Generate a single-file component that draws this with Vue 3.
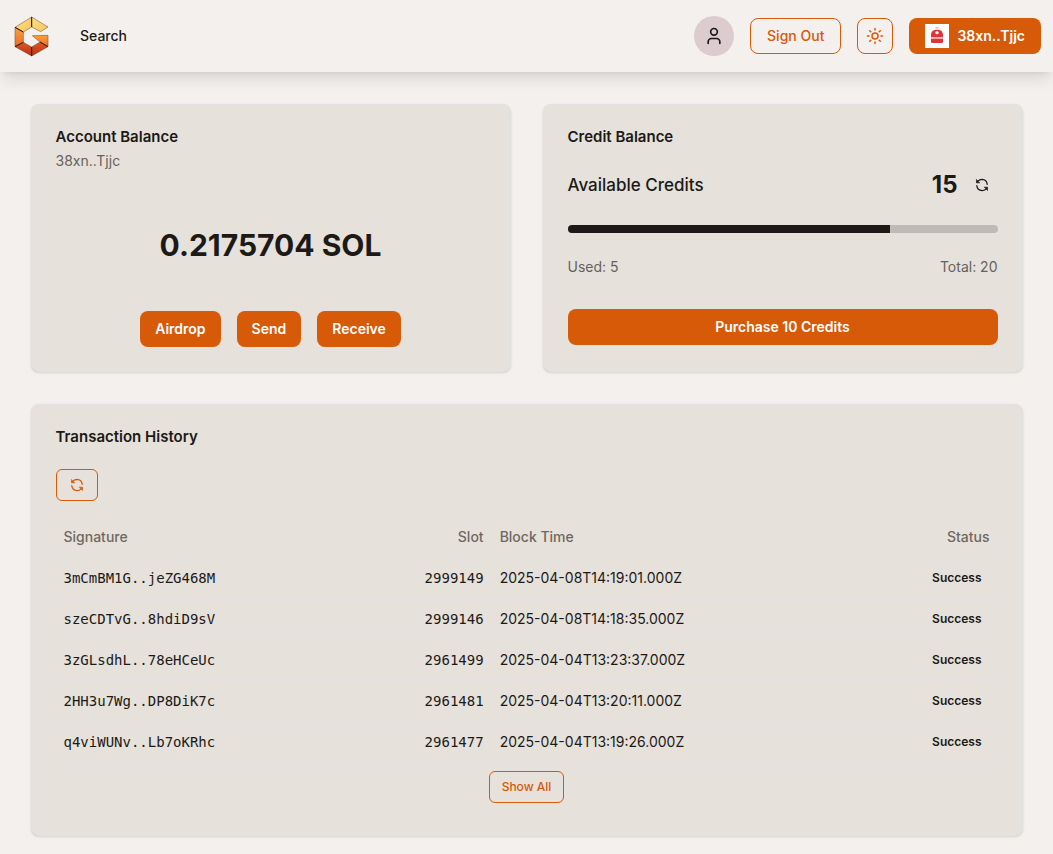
<script setup>
import { computed, ref } from 'vue'

const wallet = '38xn..Tjjc'
const total = ref(20)
const used = ref(5)
const available = computed(() => total.value - used.value)
const percent = computed(() => (available.value / total.value) * 100)

const transactions = [
  { signature: '3mCmBM1G..jeZG468M', slot: 2999149, time: '2025-04-08T14:19:01.000Z', status: 'Success' },
  { signature: 'szeCDTvG..8hdiD9sV', slot: 2999146, time: '2025-04-08T14:18:35.000Z', status: 'Success' },
  { signature: '3zGLsdhL..78eHCeUc', slot: 2961499, time: '2025-04-04T13:23:37.000Z', status: 'Success' },
  { signature: '2HH3u7Wg..DP8DiK7c', slot: 2961481, time: '2025-04-04T13:20:11.000Z', status: 'Success' },
  { signature: 'q4viWUNv..Lb7oKRhc', slot: 2961477, time: '2025-04-04T13:19:26.000Z', status: 'Success' },
]
</script>

<template>
  <div class="page">
    <header class="topbar">
      <a class="logo" href="#" aria-label="Home">
        <svg width="35" height="41" viewBox="42 45 105 123" aria-hidden="true">
          <defs>
            <linearGradient id="gold" x1="0" y1="0" x2="1" y2="1">
              <stop offset="0" stop-color="#fbe08a" />
              <stop offset="1" stop-color="#fcc35c" />
            </linearGradient>
            <linearGradient id="amber" x1="0" y1="0" x2="0" y2="1">
              <stop offset="0" stop-color="#fba03a" />
              <stop offset="1" stop-color="#ee6a22" />
            </linearGradient>
            <linearGradient id="ember" x1="0" y1="0" x2="0" y2="1">
              <stop offset="0" stop-color="#e2571f" />
              <stop offset="1" stop-color="#b8301a" />
            </linearGradient>
          </defs>
          <g stroke="#5c4a32" stroke-width="1.5" stroke-linejoin="round">
            <path d="M95 48 45 79 70 93 95 78Z" fill="url(#gold)" />
            <path d="M95 48 144 78 122 92 95 78Z" fill="url(#gold)" />
            <path d="M45 79V137L70 124V93Z" fill="url(#amber)" />
            <path d="M45 137 95 165V138L70 124Z" fill="url(#ember)" />
            <path d="M95 165 144 137 120 123 95 138Z" fill="url(#ember)" />
            <path d="M144 137V103L97 104 120 123Z" fill="url(#amber)" />
          </g>
          <path d="M95 48V78M45 79 70 93M45 137 70 124M95 165V138M144 137 120 123" stroke="#2a1a10" stroke-width="3" fill="none" />
        </svg>
      </a>
      <nav class="nav"><a href="#search">Search</a></nav>
      <div class="actions">
        <button class="avatar" type="button" aria-label="Profile">
          <svg class="stroke" width="20" height="20" viewBox="0 0 24 24" aria-hidden="true">
            <path d="M19 21v-2a4 4 0 0 0-4-4H9a4 4 0 0 0-4 4v2" />
            <circle cx="12" cy="7" r="4" />
          </svg>
        </button>
        <button class="btn outline" type="button">Sign Out</button>
        <button class="btn outline square" type="button" aria-label="Toggle theme">
          <svg class="stroke" width="18" height="18" viewBox="0 0 24 24" aria-hidden="true">
            <circle cx="12" cy="12" r="4" />
            <path d="M12 2v2M12 20v2M4.93 4.93l1.41 1.41M17.66 17.66l1.41 1.41M2 12h2M20 12h2M6.34 17.66l-1.41 1.41M19.07 4.93l-1.41 1.41" />
          </svg>
        </button>
        <button class="btn solid wallet" type="button">
          <svg width="24" height="24" viewBox="0 0 72 72" aria-hidden="true">
            <rect width="72" height="72" fill="#fff" />
            <path d="M28 13Q36 6 44 13Z" fill="#ee8a8c" />
            <path d="M18 39V31Q20 18 32 17H40Q52 18 54 31V39Z" fill="#df3338" />
            <rect x="18" y="39" width="36" height="5" fill="#f4b3b4" />
            <path d="M18 44H54V53Q54 57 50 57H22Q18 57 18 53Z" fill="#df3338" />
            <circle cx="36" cy="26" r="5" fill="#fff" />
          </svg>
          {{ wallet }}
        </button>
      </div>
    </header>

    <main class="content">
      <div class="pair">
        <section class="card">
          <h2>Account Balance</h2>
          <p class="address">{{ wallet }}</p>
          <p class="amount">0.2175704 SOL</p>
          <div class="row-buttons">
            <button class="btn solid" type="button">Airdrop</button>
            <button class="btn solid" type="button">Send</button>
            <button class="btn solid" type="button">Receive</button>
          </div>
        </section>

        <section class="card credit">
          <h2>Credit Balance</h2>
          <div class="available">
            <span class="label">Available Credits</span>
            <strong>{{ available }}</strong>
            <button class="ghost" type="button" aria-label="Refresh credits">
              <svg class="stroke" width="16" height="16" viewBox="-1 -1 26 26" aria-hidden="true">
                <path d="M20.5 11A9 9 0 0 0 12 3a9.75 9.75 0 0 0-6.74 2.74L4 7M3.5 13A9 9 0 0 0 12 21a9.75 9.75 0 0 0 6.74-2.74L20 17" />
                <path class="tip" d="M3 3.5v5h5ZM21 20.5v-5h-5Z" />
              </svg>
            </button>
          </div>
          <div class="bar" role="progressbar" aria-label="Available credits" aria-valuemin="0" :aria-valuemax="total" :aria-valuenow="available">
            <div class="fill" :style="{ width: percent + '%' }"></div>
          </div>
          <div class="usage">
            <span>Used: {{ used }}</span>
            <span>Total: {{ total }}</span>
          </div>
          <button class="btn solid" type="button">Purchase 10 Credits</button>
        </section>
      </div>

      <section class="card history">
        <h2>Transaction History</h2>
        <button class="btn outline small" type="button" aria-label="Refresh transactions">
          <svg class="stroke" width="16" height="16" viewBox="-1 -1 26 26" aria-hidden="true">
            <path d="M20.5 11A9 9 0 0 0 12 3a9.75 9.75 0 0 0-6.74 2.74L4 7M3.5 13A9 9 0 0 0 12 21a9.75 9.75 0 0 0 6.74-2.74L20 17" />
            <path class="tip" d="M3 3.5v5h5ZM21 20.5v-5h-5Z" />
          </svg>
        </button>
        <table>
          <thead>
            <tr>
              <th class="col-signature" scope="col">Signature</th>
              <th class="col-slot end" scope="col">Slot</th>
              <th scope="col">Block Time</th>
              <th class="end" scope="col">Status</th>
            </tr>
          </thead>
          <tbody>
            <tr v-for="tx in transactions" :key="tx.signature">
              <td class="mono">{{ tx.signature }}</td>
              <td class="mono end">{{ tx.slot }}</td>
              <td>{{ tx.time }}</td>
              <td class="end"><span class="badge">{{ tx.status }}</span></td>
            </tr>
          </tbody>
        </table>
        <button class="btn outline small show-all" type="button">Show All</button>
      </section>
    </main>
  </div>
</template>

<style>
body {
  margin: 0;
  background: #f4f0ed;
}
</style>

<style scoped>
* {
  box-sizing: border-box;
}
.page {
  min-height: 100vh;
  background: #f4f0ed;
  color: #1c1917;
  font: 14px/20px Inter, "Liberation Sans", sans-serif;
}
.topbar {
  display: flex;
  align-items: center;
  height: 72px;
  padding: 0 12px 0 14px;
  box-shadow: 0 10px 15px -3px rgba(0, 0, 0, 0.1), 0 4px 6px -4px rgba(0, 0, 0, 0.1);
}
.logo,
svg {
  display: block;
  flex: none;
}
.nav {
  margin-left: 31px;
}
.nav a {
  color: inherit;
  font-weight: 500;
  text-decoration: none;
}
.actions {
  display: flex;
  align-items: center;
  gap: 16px;
  margin-left: auto;
}
.stroke {
  fill: none;
  stroke: currentColor;
  stroke-width: 2;
  stroke-linecap: round;
  stroke-linejoin: round;
}
.tip {
  fill: currentColor;
  stroke-width: 1;
}
button {
  display: inline-flex;
  align-items: center;
  justify-content: center;
  margin: 0;
  padding: 0;
  border: 0;
  background: none;
  color: inherit;
  font: inherit;
  cursor: pointer;
}
.avatar {
  width: 40px;
  height: 40px;
  border-radius: 50%;
  background: #dccbcf;
}
.btn {
  height: 36px;
  padding: 0 16px;
  border-radius: 8px;
  font-weight: 500;
  white-space: nowrap;
}
.solid {
  background: #d65a08;
  color: #fff;
  font-weight: 600;
}
.outline {
  border: 1px solid #d65a08;
  color: #d65a08;
}
.square {
  width: 36px;
  padding: 0;
}
.wallet {
  gap: 8px;
}
.small {
  height: 32px;
  padding: 0 12px;
  border-radius: 6px;
  font-size: 12px;
}
.content {
  max-width: 992px;
  margin: 0 auto;
  padding: 32px 0 16px;
}
.pair {
  display: grid;
  grid-template-columns: 1fr 1fr;
  gap: 32px;
  margin-bottom: 32px;
}
.card {
  padding: 24px;
  border: 1px solid #e1e1e4;
  border-radius: 8px;
  background: #e6e1db;
  box-shadow: 0 1px 3px rgba(0, 0, 0, 0.1), 0 1px 2px -1px rgba(0, 0, 0, 0.1);
}
h2 {
  margin: 0;
  font-size: 15px;
  font-weight: 600;
  line-height: 16px;
}
.address {
  margin: 6px 0 0;
  color: #67615c;
}
.amount {
  margin: 56px 0 48px;
  font-size: 30px;
  font-weight: 700;
  line-height: 36px;
  text-align: center;
}
.row-buttons {
  display: flex;
  justify-content: center;
  gap: 16px;
}
.row-buttons .btn {
  padding: 0 15px;
}
.credit {
  display: flex;
  flex-direction: column;
}
.available {
  display: flex;
  align-items: center;
  gap: 8px;
  margin: 24px 0;
}
.label {
  margin-right: auto;
  font-size: 17px;
  font-weight: 500;
  line-height: 28px;
}
.available strong {
  font-size: 24px;
  font-weight: 700;
  line-height: 32px;
}
.ghost {
  width: 32px;
  height: 32px;
}
.bar {
  height: 8px;
  overflow: hidden;
  border-radius: 4px;
  background: #bebab6;
}
.fill {
  height: 100%;
  background: #1c1917;
}
.usage {
  display: flex;
  justify-content: space-between;
  margin: 24px 0 32px;
  color: #67615c;
}
.history {
  display: flex;
  flex-direction: column;
  align-items: flex-start;
  padding-bottom: 32px;
}
.history h2 {
  margin-bottom: 24px;
}
table {
  width: 100%;
  margin: 16px 0 8px;
  border-collapse: collapse;
}
tr {
  border-bottom: 1px solid #e1e1e4;
}
th,
td {
  height: 41px;
  padding: 0 8px;
  text-align: left;
}
th {
  height: 40px;
  color: #6f6862;
  font-weight: 500;
}
.end {
  text-align: right;
}
.col-signature {
  width: 26%;
}
.col-slot {
  width: 20.3%;
}
.mono {
  font-family: "DejaVu Sans Mono", "Liberation Mono", monospace;
}
.badge {
  padding: 0 8px;
  font-size: 12px;
  font-weight: 600;
}
.show-all {
  align-self: center;
}
</style>
